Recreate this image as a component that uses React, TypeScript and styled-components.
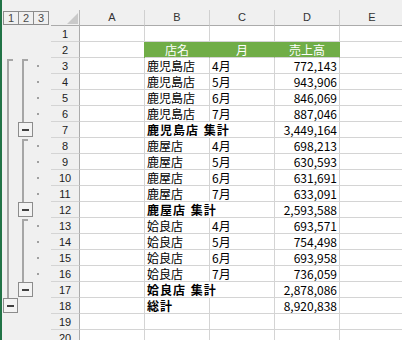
import React from 'react';
import styled, { createGlobalStyle } from 'styled-components';

const Global = createGlobalStyle`
  html, body { margin: 0; padding: 0; background: #f0f0f0; }
  body { font-family: "Liberation Sans", Arial, sans-serif; }
`;

const Sheet = styled.div`
  width: 402px;
  height: 340px;
  overflow: hidden;
  box-sizing: border-box;
  border-left: 2px solid #217346;
  background: #f0f0f0;
  display: grid;
  grid-template-columns: 49px 29px repeat(5, 65px);
  grid-template-rows: 10px 16px repeat(20, 16px);
`;

const TopStrip = styled.div`
  grid-column: 1 / -1;
  background: #f0f0f0;
`;

const LevelBar = styled.div`
  display: flex;
  align-items: flex-start;
  padding: 1px 0 0 1px;
`;

const LevelButton = styled.div`
  box-sizing: border-box;
  width: 16px;
  height: 14px;
  border: 1px solid #8c8c8c;
  margin-left: -1px;
  &:first-child { margin-left: 0; }
  font-size: 11px;
  line-height: 12px;
  color: #4a4a4a;
  text-align: center;
`;

const Corner = styled.div`
  box-sizing: border-box;
  border-right: 1px solid #b5b5b5;
  border-bottom: 1px solid #ababab;
  display: flex;
  align-items: flex-end;
  justify-content: flex-end;
  padding: 0 1px 1px 0;
`;

const ColHeader = styled.div`
  box-sizing: border-box;
  border-right: 1px solid #d0d0d0;
  border-bottom: 1px solid #ababab;
  font-size: 11px;
  line-height: 15px;
  color: #333;
  text-align: center;
`;

const Gutter = styled.div`
  grid-column: 1;
  grid-row: 3 / span 20;
  position: relative;
`;

const RowHeader = styled.div`
  box-sizing: border-box;
  border-right: 1px solid #ababab;
  border-bottom: 1px solid #d4d4d4;
  font-size: 11px;
  line-height: 15px;
  padding-top: 1px;
  color: #222;
  text-align: center;
`;

type Align = 'left' | 'right' | 'center';

const Cell = styled.div<{ $align?: Align; $bold?: boolean; $band?: boolean; $spill?: boolean; $bandStart?: boolean }>`
  box-sizing: border-box;
  background: ${(p) => (p.$band ? '#70ad47' : '#ffffff')};
  color: ${(p) => (p.$band ? '#ffffff' : '#000000')};
  border-right: 1px solid ${(p) => (p.$band ? '#70ad47' : p.$spill ? '#ffffff' : '#d4d4d4')};
  border-bottom: 1px solid #d4d4d4;
  box-shadow: ${(p) => (p.$bandStart ? '-1px 0 0 #70ad47' : 'none')};
  font-family: "Noto Sans CJK JP", "Liberation Sans", sans-serif;
  font-size: 12px;
  font-weight: ${(p) => (p.$bold ? 700 : 400)};
  letter-spacing: ${(p) => (p.$bold ? '1px' : '0')};
  word-spacing: ${(p) => (p.$bold ? '1px' : '0')};
  line-height: 15px;
  padding: 0 2px;
  white-space: nowrap;
  text-align: ${(p) => p.$align ?? 'left'};
  position: ${(p) => (p.$spill ? 'relative' : 'static')};
  z-index: ${(p) => (p.$spill ? 1 : 'auto')};
`;

type Kind = 'empty' | 'header' | 'detail' | 'subtotal' | 'total';
interface Row {
  kind: Kind;
  name?: string;
  month?: string;
  value?: string;
}

const rows: Row[] = [
  { kind: 'empty' },
  { kind: 'header', name: '店名', month: '月', value: '売上高' },
  { kind: 'detail', name: '鹿児島店', month: '4月', value: '772,143' },
  { kind: 'detail', name: '鹿児島店', month: '5月', value: '943,906' },
  { kind: 'detail', name: '鹿児島店', month: '6月', value: '846,069' },
  { kind: 'detail', name: '鹿児島店', month: '7月', value: '887,046' },
  { kind: 'subtotal', name: '鹿児島店 集計', value: '3,449,164' },
  { kind: 'detail', name: '鹿屋店', month: '4月', value: '698,213' },
  { kind: 'detail', name: '鹿屋店', month: '5月', value: '630,593' },
  { kind: 'detail', name: '鹿屋店', month: '6月', value: '631,691' },
  { kind: 'detail', name: '鹿屋店', month: '7月', value: '633,091' },
  { kind: 'subtotal', name: '鹿屋店 集計', value: '2,593,588' },
  { kind: 'detail', name: '姶良店', month: '4月', value: '693,571' },
  { kind: 'detail', name: '姶良店', month: '5月', value: '754,498' },
  { kind: 'detail', name: '姶良店', month: '6月', value: '693,958' },
  { kind: 'detail', name: '姶良店', month: '7月', value: '736,059' },
  { kind: 'subtotal', name: '姶良店 集計', value: '2,878,086' },
  { kind: 'total', name: '総計', value: '8,920,838' },
  { kind: 'empty' },
  { kind: 'empty' },
];

const rowTop = (n: number) => 26 + 16 * (n - 1);
const LINE = '#a6a6a6';

const MinusBox: React.FC<{ x: number; row: number }> = ({ x, row }) => {
  const y = rowTop(row);
  return (
    <g>
      <rect x={x + 0.5} y={y + 0.5} width={14} height={14} fill="#f3f3f3" stroke="#8c8c8c" strokeWidth={1} />
      <rect x={x + 4} y={y + 7} width={7} height={2} fill="#404040" />
    </g>
  );
};

const Bracket: React.FC<{ x: number; from: number; to: number }> = ({ x, from, to }) => {
  const y1 = rowTop(from) + 1;
  const y2 = rowTop(to);
  return (
    <g fill={LINE}>
      <rect x={x} y={y1} width={2} height={y2 - y1} />
      <rect x={x} y={y1} width={6} height={2} />
    </g>
  );
};

const OutlineDrawing: React.FC = () => {
  const dots = [3, 4, 5, 6, 8, 9, 10, 11, 13, 14, 15, 16];
  return (
    <svg width={49} height={320} viewBox="2 26 49 320" style={{ display: 'block' }}>
      <Bracket x={7} from={3} to={18} />
      <Bracket x={22} from={3} to={7} />
      <Bracket x={22} from={8} to={12} />
      <Bracket x={22} from={13} to={17} />
      {dots.map((r) => (
        <rect key={r} x={37} y={rowTop(r) + 7} width={2} height={2} fill="#a0a0a0" />
      ))}
      <MinusBox x={18} row={7} />
      <MinusBox x={18} row={12} />
      <MinusBox x={18} row={17} />
      <MinusBox x={3} row={18} />
    </svg>
  );
};

const CornerMark: React.FC = () => (
  <svg width={11} height={11} viewBox="0 0 11 11" style={{ display: 'block' }}>
    <polygon points="11,0 11,11 0,11" fill="#c9c9c9" />
  </svg>
);

const columns = ['A', 'B', 'C', 'D', 'E'];

export default function App() {
  return (
    <>
      <Global />
      <Sheet>
        <TopStrip />
        <LevelBar>
          <LevelButton>1</LevelButton>
          <LevelButton>2</LevelButton>
          <LevelButton>3</LevelButton>
        </LevelBar>
        <Corner>
          <CornerMark />
        </Corner>
        {columns.map((c) => (
          <ColHeader key={c}>{c}</ColHeader>
        ))}
        <Gutter>
          <OutlineDrawing />
        </Gutter>
        {rows.map((r, i) => {
          const band = r.kind === 'header';
          const bold = r.kind === 'subtotal' || r.kind === 'total';
          return (
            <React.Fragment key={i}>
              <RowHeader>{i + 1}</RowHeader>
              <Cell />
              <Cell $band={band} $bandStart={band} $bold={bold} $spill={r.kind === 'subtotal'} $align={band ? 'center' : 'left'}>
                {r.name}
              </Cell>
              <Cell $band={band} $align={band ? 'center' : 'left'}>{r.month}</Cell>
              <Cell $band={band} $align={band ? 'center' : 'right'}>{r.value}</Cell>
              <Cell />
            </React.Fragment>
          );
        })}
      </Sheet>
    </>
  );
}
